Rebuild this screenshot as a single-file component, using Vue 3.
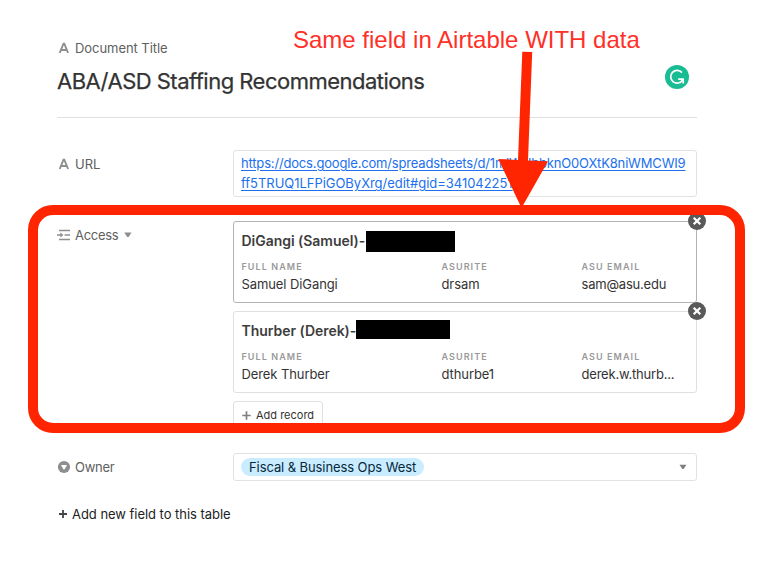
<script setup>
const records = [
  { title: 'DiGangi (Samuel)-', mask: 'mask-a', tone: 'active', name: 'Samuel DiGangi', rite: 'drsam', email: 'sam@asu.edu' },
  { title: 'Thurber (Derek)-', mask: 'mask-b', tone: 'plain', name: 'Derek Thurber', rite: 'dthurbe1', email: 'derek.w.thurb...' },
]
</script>

<template>
  <main class="page">
    <header class="head">
      <div class="label">
        <svg class="ico" width="14" height="14" viewBox="0 0 14 14"><path d="M2.7 12 6.5 2.6h.8L11.1 12M4.2 9h5.4" fill="none" stroke="#8e8e8e" stroke-width="1.9" /></svg>
        <span class="t-doc">Document Title</span>
      </div>
      <div class="title-row">
        <h1>ABA/ASD Staffing Recommendations</h1>
        <svg class="badge" width="24" height="24" viewBox="0 0 24 24">
          <circle cx="12" cy="12" r="12" fill="#1abc94" />
          <path d="M17 7.6A6.4 6.4 0 1 0 17.6 15" fill="none" stroke="#fff" stroke-width="1.7" />
          <path d="M13.2 14.2h5v4.4" fill="none" stroke="#fff" stroke-width="1.7" />
        </svg>
      </div>
    </header>

    <section class="row url-row">
      <div class="label">
        <svg class="ico" width="14" height="14" viewBox="0 0 14 14"><path d="M2.7 12 6.5 2.6h.8L11.1 12M4.2 9h5.4" fill="none" stroke="#8e8e8e" stroke-width="1.9" /></svg>
        <span>URL</span>
      </div>
      <div class="box url-box">
        <a class="u1">https://docs.google.com/spreadsheets/d/1mlWUbbknO0OXtK8niWMCWI9</a>
        <a class="u2">ff5TRUQ1LFPiGOByXrg/edit#gid=341042251</a>
      </div>
    </section>

    <section class="row access-row">
      <div class="label">
        <svg class="ico" width="14" height="14" viewBox="0 0 14 14">
          <path d="M2 2.5h11M7.6 7h5.4M2 11.5h11M0 7h5" fill="none" stroke="#8e8e8e" stroke-width="1.6" />
          <path d="M3.4 4.5 6.4 7 3.4 9.5z" fill="#8e8e8e" />
        </svg>
        <span class="t-access">Access</span>
        <svg class="caret" width="8" height="6" viewBox="0 0 8 6"><path d="M.3.5h7.2L4.6 5H3.2z" fill="#8e8e8e" /></svg>
      </div>
      <div class="cards">
        <article v-for="r in records" :key="r.name" class="card" :class="r.tone">
          <svg class="close" width="18" height="18" viewBox="0 0 18 18">
            <circle cx="9" cy="9" r="9" fill="#595959" />
            <path d="m5.7 5.7 6.6 6.6m0-6.6-6.6 6.6" stroke="#fff" stroke-width="2.2" />
          </svg>
          <div class="name-row">
            <h2 :class="r.mask + '-name'">{{ r.title }}</h2>
            <i class="mask" :class="r.mask"></i>
          </div>
          <dl>
            <div><dt>Full name</dt><dd>{{ r.name }}</dd></div>
            <div><dt>ASURITE</dt><dd>{{ r.rite }}</dd></div>
            <div><dt>ASU email</dt><dd class="email">{{ r.email }}</dd></div>
          </dl>
        </article>
        <button class="add-record">
          <svg width="9" height="9" viewBox="0 0 9 9"><path d="M4.5.3v8.4M.3 4.5h8.4" stroke="#808080" stroke-width="1.7" /></svg>
          <span>Add record</span>
        </button>
      </div>
    </section>

    <section class="row owner-row">
      <div class="label">
        <svg class="ico" width="14" height="14" viewBox="0 0 14 14"><circle cx="7" cy="7" r="6.1" fill="#8e8e8e" /><path d="M4 5.1h6L7.5 9.5h-1z" fill="#fff" /></svg>
        <span class="t-owner">Owner</span>
      </div>
      <div class="box owner-box">
        <span class="pill">Fiscal &amp; Business Ops West</span>
        <svg width="8" height="6" viewBox="0 0 8 6"><path d="M.5.7h7L4.6 5H3.3z" fill="#808080" /></svg>
      </div>
    </section>

    <div class="add-field">
      <svg width="8" height="8" viewBox="0 0 8 8"><path d="M4 0v8M0 4h8" stroke="#444" stroke-width="1.8" /></svg>
      <span>Add new field to this table</span>
    </div>

    <svg class="markup" width="773" height="565" viewBox="0 0 773 565">
      <rect x="33" y="210" width="707" height="218" rx="20" fill="none" stroke="#ff2500" stroke-width="10" />
      <path d="M522.3 51.8 532.2 52.1 528 160.6 548 161.3 521.5 208 498.3 159 518 159.9z" fill="#ff2500" />
    </svg>
    <p class="note">Same field in Airtable WITH data</p>
  </main>
</template>

<style>
body { margin: 0; background: #fff; }
</style>

<style scoped>
* { box-sizing: border-box; }
.page {
  position: relative; width: 773px; height: 565px; padding: 38px 76px 0 57px; overflow: hidden;
  font: 13px/20px Inter, "Liberation Sans", sans-serif; color: #333; background: #fff;
}
.head { height: 80px; border-bottom: 1px solid #e0e0e0; }
.label { display: flex; align-items: center; height: 20px; color: #606060; width: 176px; flex: none; }
.ico { margin-right: 4px; flex: none; }
.t-doc { letter-spacing: -.06px; }
.t-owner { letter-spacing: -.25px; }
.caret { margin-left: 6px; }
.t-access { letter-spacing: -.3px; }
.title-row { display: flex; justify-content: space-between; padding: 7px 8px 0 0; }
h1 { margin: 0; font-size: 22px; line-height: 32px; font-weight: 400; letter-spacing: -.52px; color: #333; white-space: nowrap; -webkit-text-stroke: .25px #333; }
.row { display: flex; }
.box { width: 464px; border: 1px solid #e2e2e2; border-radius: 3px; }
.url-row { margin-top: 32px; height: 47px; }
.url-row .label { margin-top: 4px; }
.url-box { display: flex; flex-direction: column; align-items: flex-start; padding: 2px 7px; color: #2070ee; white-space: nowrap; }
.url-box a { text-decoration: underline; text-underline-offset: 2px; }
.u1 { letter-spacing: -.17px; }
.u2 { letter-spacing: -.03px; }
.access-row { margin-top: 24px; height: 208px; }
.access-row .label { margin-top: 4px; }
.cards { display: flex; flex-direction: column; align-items: flex-start; gap: 8px; }
.card { position: relative; width: 464px; height: 82px; border: 1px solid #e0e0e0; border-radius: 3px; padding: 9px 7px 0 7.5px; }
.card.active { border-color: #b3b3b3; }
.close { position: absolute; right: -10px; top: -10px; }
.name-row { display: flex; height: 21px; }
h2 { margin: 0; font-size: 14px; line-height: 20px; font-weight: 600; letter-spacing: -.03px; color: #3d3d3d; white-space: nowrap; }
.mask-a-name { width: 124.5px; }
.mask-b-name { width: 114.5px; }
.mask { height: 21px; background: #000; flex: none; }
.mask-a { width: 89px; }
.mask-b { width: 94px; height: 19px; margin-top: -1px; }
dl { display: grid; grid-template-columns: 200px 140px 1fr; margin: 8px 0 0; }
dt { font-size: 9px; line-height: 13px; font-weight: 600; letter-spacing: 1.08px; color: #999; text-transform: uppercase; }
dd { margin: 2px 0 0; line-height: 18px; letter-spacing: -.09px; white-space: nowrap; }
dd.email { letter-spacing: -.2px; }
.add-record { display: flex; align-items: center; gap: 5px; width: 90px; height: 28px; padding: 0 0 0 8px; border: 1px solid #e0e0e0; border-radius: 3px; background: #fff; font: 11px/20px Inter, sans-serif; color: #333; white-space: nowrap; }
.add-record svg { flex: none; }
.owner-row { margin-top: 24px; height: 28px; }
.owner-row .label { margin-top: 4px; }
.owner-box { display: flex; align-items: center; justify-content: space-between; padding: 0 9px 0 7px; }
.pill { width: 183px; height: 18px; border-radius: 9px; background: #c9ecff; padding-left: 8px; line-height: 18px; letter-spacing: -.09px; color: #06283b; white-space: nowrap; }
.add-field { display: flex; align-items: center; gap: 5px; height: 20px; margin-top: 23px; padding-left: 2px; color: #222; letter-spacing: -.04px; white-space: nowrap; }
.markup { position: absolute; left: 0; top: 0; }
.note { position: absolute; left: 293px; top: 25px; margin: 0; font: 24px/30px "Liberation Sans", sans-serif; color: #ff3028; white-space: nowrap; }
</style>
